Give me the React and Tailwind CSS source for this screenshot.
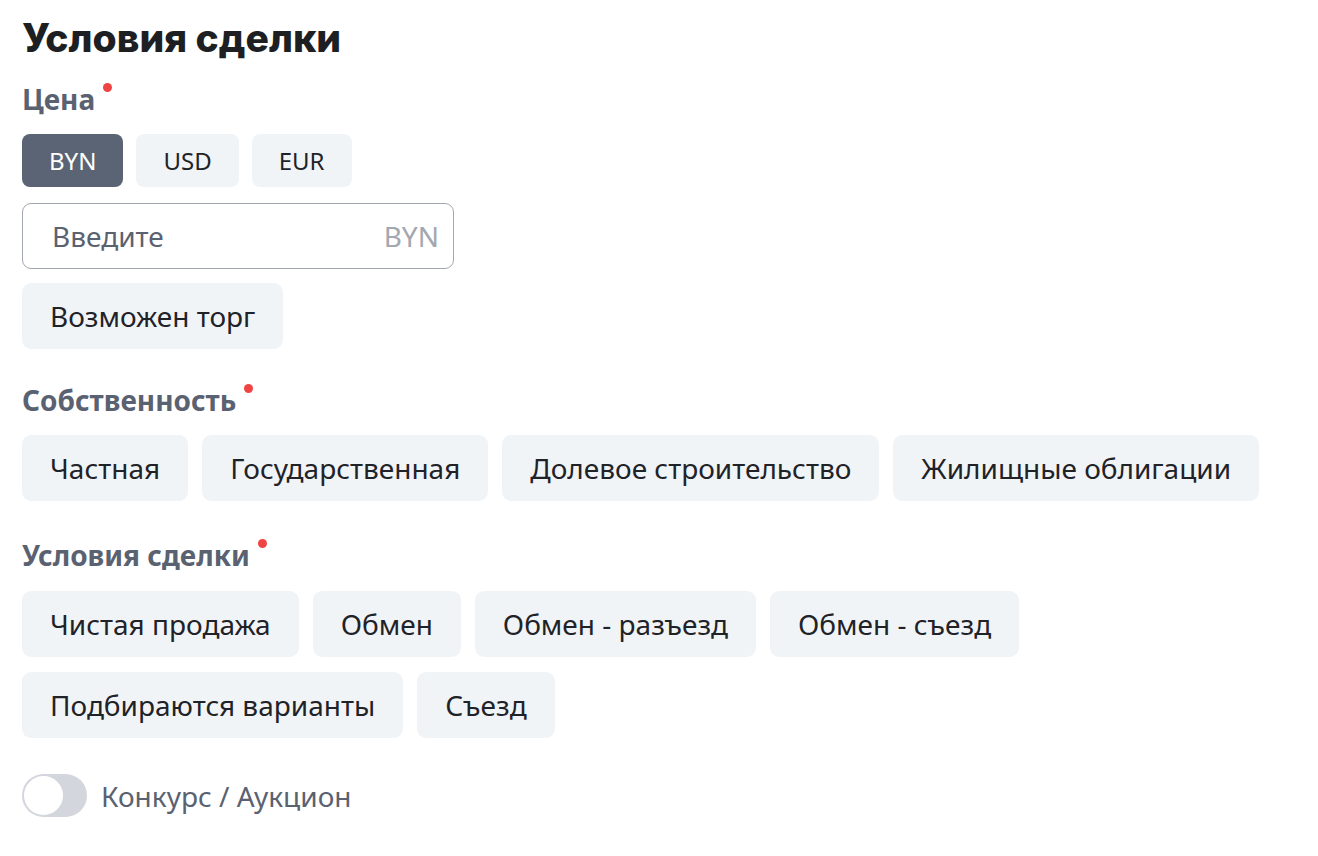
import { useState } from "react";

const font = { fontFamily: '"Noto Sans", "Open Sans", sans-serif' };

function Label({ children, className = "" }) {
  return (
    <div className={`flex items-start text-[28px] leading-[32px] font-bold text-[#5a6271] ${className}`}>
      <span>{children}</span>
      <span className="ml-[8px] mt-[0px] w-[9px] h-[9px] rounded-full bg-[#ef4444]" />
    </div>
  );
}

function Chip({ children }) {
  return (
    <button className="h-[66px] px-[28px] rounded-[9px] bg-[#f1f4f7] text-[28px] leading-[32px] text-[#1f2328] whitespace-nowrap">
      {children}
    </button>
  );
}

export default function App() {
  const [currency, setCurrency] = useState("BYN");
  const [on, setOn] = useState(false);

  return (
    <div className="min-h-screen bg-white pl-[22px] pt-[14px]" style={font}>
      <h1
        className="text-[39px] leading-[48px] font-extrabold text-[#1d1f23]"
        style={{ fontFamily: 'Inter, "Noto Sans", sans-serif' }}
      >
        Условия сделки
      </h1>

      <Label className="mt-[21px]">Цена</Label>

      <div className="flex gap-[13px] mt-[19px]">
        {["BYN", "USD", "EUR"].map((c) => (
          <button
            key={c}
            onClick={() => setCurrency(c)}
            className={`h-[53px] px-[27px] rounded-[8px] text-[24px] leading-[28px] ${
              currency === c ? "bg-[#5b6474] text-white" : "bg-[#f1f4f7] text-[#1f2328]"
            }`}
          >
            {c}
          </button>
        ))}
      </div>

      <div className="mt-[16px] w-[432px] h-[66px] rounded-[9px] border-[1.5px] border-[#a3a7b0] flex items-center justify-between pl-[29px] pr-[14px]">
        <span className="text-[28px] text-[#5a6271]">Введите</span>
        <span className="text-[28px] text-[#a3a7b0]">BYN</span>
      </div>

      <div className="mt-[14px]">
        <Chip>Возможен торг</Chip>
      </div>

      <Label className="mt-[35px]">Собственность</Label>

      <div className="flex flex-wrap gap-[14px] mt-[19px]">
        <Chip>Частная</Chip>
        <Chip>Государственная</Chip>
        <Chip>Долевое строительство</Chip>
        <Chip>Жилищные облигации</Chip>
      </div>

      <Label className="mt-[38px]">Условия сделки</Label>

      <div className="flex flex-wrap gap-x-[14px] gap-y-[15px] mt-[20px] w-[1010px]">
        <Chip>Чистая продажа</Chip>
        <Chip>Обмен</Chip>
        <Chip>Обмен - разъезд</Chip>
        <Chip>Обмен - съезд</Chip>
        <Chip>Подбираются варианты</Chip>
        <Chip>Съезд</Chip>
      </div>

      <div className="flex items-center gap-[14px] mt-[36px]">
        <button
          onClick={() => setOn(!on)}
          className={`w-[65px] h-[43px] rounded-full p-[2px] flex ${on ? "bg-[#5b6474] justify-end" : "bg-[#d3d6dc] justify-start"}`}
        >
          <span className="w-[39px] h-[39px] rounded-full bg-white" />
        </button>
        <span className="text-[28px] text-[#5a6271]">Конкурс / Аукцион</span>
      </div>
    </div>
  );
}
